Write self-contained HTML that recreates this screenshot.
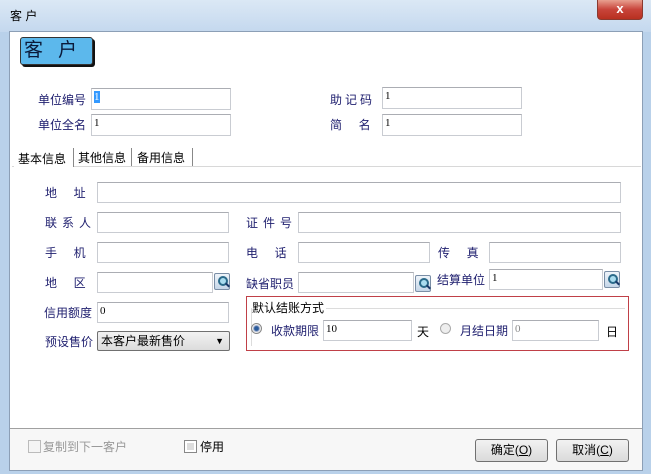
<!DOCTYPE html>
<html><head><meta charset="utf-8"><style>
*{margin:0;padding:0;box-sizing:border-box}
body{width:651px;height:474px;overflow:hidden;background:#b9d1ea;font-family:"Liberation Sans","Noto Sans CJK SC",sans-serif;font-size:12px;position:relative}
.a{position:absolute}
.t{position:absolute;color:#1e1e6e;font-size:12px;line-height:14px;white-space:nowrap}
.i{position:absolute;background:#fff;border:1px solid #c9ccd2;border-top-color:#abadb3;font-size:11px;padding:1px 2px;line-height:14px;color:#000;font-family:"Liberation Serif",serif}
.s{position:absolute;width:16px;height:17px;border:1px solid #7a8ea6;border-radius:2px;background:linear-gradient(#eef4fa,#c5d6e8)}
.s:before{content:"";position:absolute;left:3px;top:2px;width:6px;height:6px;border:2px solid #2a6a8a;border-radius:50%;background:#a9dcef}
.s:after{content:"";position:absolute;left:10px;top:10px;width:5px;height:2px;background:#1a3a6a;transform:rotate(45deg)}
</style></head><body>
<div class="a" style="left:0;top:0;width:651px;height:32px;background:linear-gradient(#dbe8f5,#c4d8ee)"></div>
<div class="t" style="left:10px;top:9px;color:#000">客 户</div>
<div class="a" style="left:597px;top:0;width:46px;height:20px;border:1px solid #8a3a30;border-top:none;border-radius:0 0 4px 4px;background:linear-gradient(#e8a090,#c8443a 50%,#b83020);color:#fff;font-weight:bold;text-align:center;line-height:18px;font-size:13px">x</div>
<div class="a" style="left:9px;top:31px;width:634px;height:440px;background:#fff;border:1px solid #8c9fb6"></div>
<div class="a" style="left:10px;top:428px;width:632px;height:42px;background:#f7f7f7;border-top:1px solid #a0a0a0"></div>
<div class="a" style="left:20px;top:37px;width:73px;height:28px;background:#5cb8ec;border:1px solid #333;border-radius:3px;box-shadow:2px 2px 0 #111;color:#0a1a3a;font-size:19px;line-height:24px;white-space:nowrap"><span style="position:absolute;left:3px;top:1px">客</span><span style="position:absolute;left:37px;top:1px">户</span></div>
<div class="t" style="left:38px;top:93px">单位编号</div><div class="i" style="left:91px;top:88px;width:140px;height:22px"><span style="background:#3399ff;color:#fff">1</span></div>
<div class="t" style="left:38px;top:118px">单位全名</div><div class="i" style="left:91px;top:114px;width:140px;height:22px">1</div>
<div class="t" style="left:330px;top:93px;letter-spacing:3px">助记码</div><div class="i" style="left:382px;top:87px;width:140px;height:22px">1</div>
<div class="t" style="left:330px;top:118px">简&nbsp;&nbsp;&nbsp;&nbsp;&nbsp;名</div><div class="i" style="left:382px;top:114px;width:140px;height:22px">1</div>
<div class="a" style="left:12px;top:166px;width:629px;height:1px;background:#d8d8d8"></div>
<div class="a" style="left:14px;top:148px;width:60px;height:19px;background:#fff;border-right:1px solid #888"></div>
<div class="t" style="left:18px;top:152px;color:#000">基本信息</div>
<div class="a" style="left:131px;top:148px;width:1px;height:18px;background:#888"></div>
<div class="t" style="left:78px;top:151px;color:#000">其他信息</div>
<div class="a" style="left:192px;top:148px;width:1px;height:18px;background:#888"></div>
<div class="t" style="left:137px;top:151px;color:#000">备用信息</div>
<div class="t" style="left:45px;top:186px">地&nbsp;&nbsp;&nbsp;&nbsp;&nbsp;址</div><div class="i" style="left:97px;top:182px;width:524px;height:21px"></div>
<div class="t" style="left:45px;top:216px;letter-spacing:5px">联系人</div><div class="i" style="left:97px;top:212px;width:132px;height:21px"></div>
<div class="t" style="left:246px;top:216px;letter-spacing:5px">证件号</div><div class="i" style="left:298px;top:212px;width:323px;height:21px"></div>
<div class="t" style="left:45px;top:246px">手&nbsp;&nbsp;&nbsp;&nbsp;&nbsp;机</div><div class="i" style="left:97px;top:242px;width:132px;height:21px"></div>
<div class="t" style="left:246px;top:246px">电&nbsp;&nbsp;&nbsp;&nbsp;&nbsp;话</div><div class="i" style="left:298px;top:242px;width:132px;height:21px"></div>
<div class="t" style="left:438px;top:246px">传&nbsp;&nbsp;&nbsp;&nbsp;&nbsp;真</div><div class="i" style="left:489px;top:242px;width:132px;height:21px"></div>
<div class="t" style="left:45px;top:276px">地&nbsp;&nbsp;&nbsp;&nbsp;&nbsp;区</div><div class="i" style="left:97px;top:272px;width:116px;height:21px"></div><div class="s" style="left:214px;top:273px"></div>
<div class="t" style="left:246px;top:277px">缺省职员</div><div class="i" style="left:298px;top:272px;width:116px;height:21px"></div><div class="s" style="left:415px;top:275px"></div>
<div class="t" style="left:437px;top:273px">结算单位</div><div class="i" style="left:489px;top:269px;width:114px;height:21px">1</div><div class="s" style="left:604px;top:271px"></div>
<div class="t" style="left:44px;top:306px">信用额度</div><div class="i" style="left:97px;top:302px;width:132px;height:21px">0</div>
<div class="t" style="left:45px;top:335px">预设售价</div>
<div class="a" style="left:97px;top:331px;width:133px;height:20px;border:1px solid #707070;border-radius:2px;background:linear-gradient(#f2f2f2,#dcdcdc);color:#000;padding-left:3px;line-height:18px">本客户最新售价<span style="position:absolute;right:5px;top:0;font-size:9px">▼</span></div>
<div class="a" style="left:246px;top:296px;width:383px;height:55px;border:1px solid #c04048"></div>
<div class="a" style="left:251px;top:308px;width:374px;height:38px;border:1px solid #dcdcdc;border-bottom:none;border-right:none"></div>
<div class="t" style="left:252px;top:301px;color:#000;background:#fff;padding-right:2px">默认结账方式</div>
<div class="a" style="left:251px;top:323px;width:11px;height:11px;border-radius:50%;border:1px solid #888;background:radial-gradient(#2a5a9a 30%,#9ac 45%,#eee 60%)"></div>
<div class="t" style="left:271px;top:324px">收款期限</div><div class="i" style="left:323px;top:320px;width:89px;height:21px">10</div>
<div class="t" style="left:417px;top:325px;color:#000">天</div>
<div class="a" style="left:440px;top:323px;width:11px;height:11px;border-radius:50%;border:1px solid #aaa;background:#eee"></div>
<div class="t" style="left:460px;top:324px">月结日期</div><div class="i" style="left:512px;top:320px;width:87px;height:21px;color:#888">0</div>
<div class="t" style="left:606px;top:325px;color:#000">日</div>
<div class="a" style="left:28px;top:440px;width:13px;height:13px;border:1px solid #bbb;background:#f4f4f4"></div>
<div class="t" style="left:43px;top:440px;color:#999">复制到下一客户</div>
<div class="a" style="left:184px;top:440px;width:13px;height:13px;border:1px solid #888;background:#ddd;box-shadow:inset 0 0 0 2px #fff"></div>
<div class="t" style="left:200px;top:440px;color:#000">停用</div>
<div class="a" style="left:475px;top:439px;width:73px;height:23px;border:1px solid #707070;border-radius:3px;background:linear-gradient(#f2f2f2,#dadada);text-align:center;line-height:21px;color:#000">确定(<u>O</u>)</div>
<div class="a" style="left:556px;top:439px;width:73px;height:23px;border:1px solid #707070;border-radius:3px;background:linear-gradient(#f2f2f2,#dadada);text-align:center;line-height:21px;color:#000">取消(<u>C</u>)</div>
</body></html>
